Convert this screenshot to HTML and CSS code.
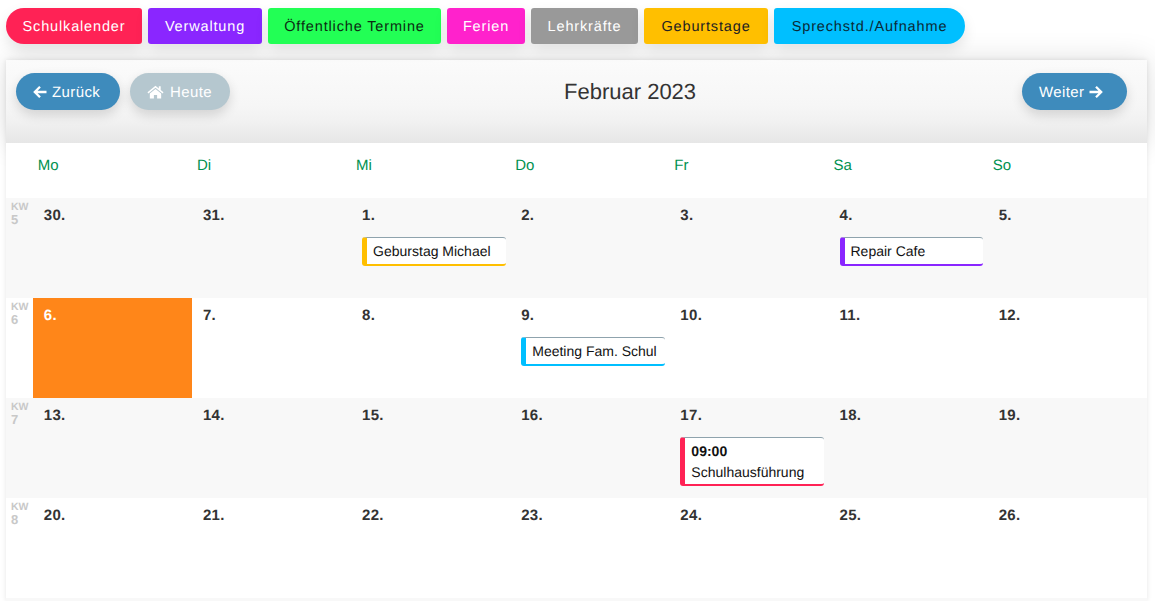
FILE: index.html
```html
<!DOCTYPE html>
<html lang="de">
<head>
<meta charset="utf-8">
<title>Schulkalender</title>
<link rel="stylesheet" href="styles.css">
</head>
<body>
<nav class="tags">
  <span class="tag tag-first t-school red">Schulkalender</span>
  <span class="tag t-admin purple">Verwaltung</span>
  <span class="tag t-public green">Öffentliche Termine</span>
  <span class="tag t-holiday pink">Ferien</span>
  <span class="tag t-teachers gray">Lehrkräfte</span>
  <span class="tag t-birthday amber">Geburtstage</span>
  <span class="tag tag-last t-office sky">Sprechstd./Aufnahme</span>
</nav>
<main class="card">
  <header class="cal-head">
    <div class="head-left">
      <a class="btn btn-back"><svg class="ico" viewBox="0 0 14 14"><path d="M7 1.800 1.800 7 7 12.200M2.500 7H13.500" fill="none" stroke="currentColor" stroke-width="2.300"/></svg>Zurück</a>
      <a class="btn btn-today"><svg class="ico-home" viewBox="0 0 18 14"><path d="M9 0.500 0.500 7.300l1 1.200L9 2.500l7.500 6 1-1.200-3-2.400V1h-2v2.300z" fill="currentColor"/><path d="M9 3.700 3 8.500V14h4.300v-3.800h3.400V14H15V8.500z" fill="currentColor"/></svg>Heute</a>
    </div>
    <h1 class="title">Februar 2023</h1>
    <a class="btn btn-next">Weiter<svg class="ico ico-right" viewBox="0 0 14 14"><path d="M7 1.800 12.200 7 7 12.200M11.500 7H.5" fill="none" stroke="currentColor" stroke-width="2.300"/></svg></a>
  </header>
  <div class="days">
    <span></span><span>Mo</span><span>Di</span><span>Mi</span><span>Do</span><span>Fr</span><span>Sa</span><span>So</span>
  </div>
  <section class="week odd">
    <div class="kw">KW<span>5</span></div>
    <div class="day"><b>30.</b></div>
    <div class="day"><b>31.</b></div>
    <div class="day"><b>1.</b><div class="event ev-amber">Geburstag Michael</div></div>
    <div class="day"><b>2.</b></div>
    <div class="day"><b>3.</b></div>
    <div class="day"><b>4.</b><div class="event ev-purple">Repair Cafe</div></div>
    <div class="day"><b>5.</b></div>
  </section>
  <section class="week">
    <div class="kw">KW<span>6</span></div>
    <div class="day today"><b>6.</b></div>
    <div class="day"><b>7.</b></div>
    <div class="day"><b>8.</b></div>
    <div class="day"><b>9.</b><div class="event ev-sky">Meeting Fam. Schul</div></div>
    <div class="day"><b>10.</b></div>
    <div class="day"><b>11.</b></div>
    <div class="day"><b>12.</b></div>
  </section>
  <section class="week odd">
    <div class="kw">KW<span>7</span></div>
    <div class="day"><b>13.</b></div>
    <div class="day"><b>14.</b></div>
    <div class="day"><b>15.</b></div>
    <div class="day"><b>16.</b></div>
    <div class="day"><b>17.</b><div class="event ev-red"><strong>09:00</strong><br>Schulhausführung</div></div>
    <div class="day"><b>18.</b></div>
    <div class="day"><b>19.</b></div>
  </section>
  <section class="week">
    <div class="kw">KW<span>8</span></div>
    <div class="day"><b>20.</b></div>
    <div class="day"><b>21.</b></div>
    <div class="day"><b>22.</b></div>
    <div class="day"><b>23.</b></div>
    <div class="day"><b>24.</b></div>
    <div class="day"><b>25.</b></div>
    <div class="day"><b>26.</b></div>
  </section>
  <div class="card-foot"></div>
</main>
</body>
</html>
```
FILE: styles.css
```css
* { box-sizing: border-box; }
html, body { height: 601px; overflow: hidden; }
body {
  margin: 0;
  background: #fff;
  font-family: "Liberation Sans", Arial, sans-serif;
  color: #333;
  text-rendering: geometricPrecision;
}
.tags {
  display: flex;
  gap: 6px;
  padding: 8px 6px 0;
  height: 60px;
}
.tag {
  display: flex;
  justify-content: center;
  height: 36px;
  line-height: 39px;
  border-radius: 3px;
  font-size: 14.5px;
  letter-spacing: 0.85px;
  color: #fff;
  box-shadow: 0 6px 14px rgba(0, 0, 0, 0.1);
  white-space: nowrap;
}
.t-school { width: 136px; }
.t-admin { width: 114px; }
.t-public { width: 173px; }
.t-holiday { width: 78px; }
.t-teachers { width: 107px; }
.t-birthday { width: 124px; }
.t-office { width: 191px; }
.tag-first { border-radius: 18px 3px 3px 18px; }
.tag-last { border-radius: 3px 18px 18px 3px; }
.red { background: #ff2255; }
.purple { background: #8a26ff; }
.green { background: #22ff55; color: #0b2b12; }
.pink { background: #ff22cc; }
.gray { background: #999; }
.amber { background: #ffbf00; color: #222; }
.sky { background: #00bfff; color: #0a2a36; }
.card {
  width: 1141px;
  margin-left: 6px;
  background: #fff;
  box-shadow: 0 0 5px rgba(0, 0, 0, 0.1);
}
.cal-head {
  height: 83px;
  padding: 13px 20px 0 10px;
  display: grid;
  grid-template-columns: 548px auto 1fr;
  align-items: start;
  background: linear-gradient(#fbfbfb 0%, #f6f6f6 55%, #f1f1f1 75%, #e6e6e6 100%);
  box-shadow: 0 0 30px rgba(0, 0, 0, 0.13);
}
.head-left { display: flex; gap: 10px; }
.title {
  margin: 0;
  font-size: 22px;
  font-weight: 400;
  line-height: 37px;
  color: #333;
}
.btn {
  display: inline-flex;
  align-items: center;
  height: 37px;
  padding-top: 1px;
  border-radius: 19px;
  background: #3e8bbc;
  color: #fff;
  font-size: 15px;
  letter-spacing: 0.4px;
  box-shadow: 0 5px 12px rgba(0, 0, 0, 0.14);
}
.btn-back { width: 104px; padding-left: 17px; }
.btn-today { width: 100px; padding-left: 17px; background: #b5c7cf; }
.btn-next { width: 105px; padding-left: 17px; justify-self: end; }
.ico { width: 14px; height: 14px; margin-right: 5px; }
.ico-right { margin: 0 0 0 5px; }
.ico-home { width: 17px; height: 14px; margin-right: 6px; }
.days {
  display: grid;
  grid-template-columns: 27px repeat(7, 1fr);
  height: 55px;
  padding-top: 14px;
  font-size: 15px;
  color: #009150;
  background: #fff;
}
.days span { padding-left: 4.8px; }
.days span:first-child { padding: 0; }
.week {
  display: grid;
  grid-template-columns: 27px repeat(7, 1fr);
  height: 100px;
  background: #fff;
}
.odd { background: #f8f8f8; }
.kw {
  padding: 4px 0 0 5px;
  font-size: 10.5px;
  line-height: 11px;
  font-weight: 700;
  color: #c8c8c8;
}
.kw span { display: block; font-size: 13px; line-height: 13px; }
.day { padding: 9px 0 0 10.8px; font-size: 15px; line-height: 17px; }
.day b { display: block; color: #333; letter-spacing: 0.3px; }
.today { background: #ff8619; }
.today b { color: #fff; }
.event {
  width: 143.5px;
  height: 29px;
  margin-top: 13px;
  padding: 4px 0 0 6px;
  background: #fff;
  border-top: 1px solid #8fa3ad;
  border-left: 5px solid;
  border-bottom: 2px solid;
  border-radius: 3px;
  font-size: 14px;
  line-height: 18px;
  color: #111;
  white-space: nowrap;
  overflow: hidden;
}
.event strong { font-weight: 700; }
.ev-amber { border-left-color: #ffbf00; border-bottom-color: #ffbf00; }
.ev-purple { border-left-color: #8a26ff; border-bottom-color: #8a26ff; }
.ev-sky { border-left-color: #00bfff; border-bottom-color: #00bfff; }
.ev-red {
  height: 49px;
  line-height: 21px;
  padding-top: 3px;
  border-left-color: #ff2255;
  border-bottom-color: #ff2255;
}
.card-foot { height: 3px; background: #f8f8f8; }
```
